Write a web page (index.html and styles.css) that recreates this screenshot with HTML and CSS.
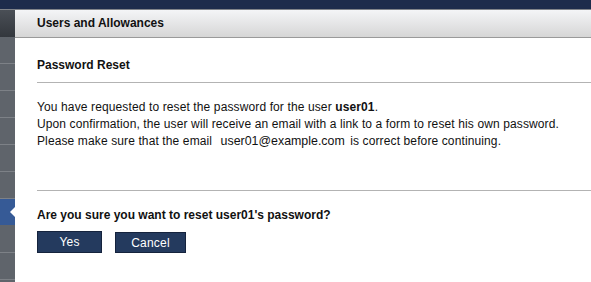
FILE: index.html
```html
<!DOCTYPE html>
<html>
<head>
<meta charset="utf-8">
<link rel="stylesheet" href="styles.css">
</head>
<body>
<div class="topbar"></div>
<div class="main">
  <nav class="sidebar">
    <div class="side-head"></div>
    <div class="side-item"></div>
    <div class="side-item"></div>
    <div class="side-item"></div>
    <div class="side-item"></div>
    <div class="side-item"></div>
    <div class="side-item"></div>
    <div class="side-item active"><span class="arrow"></span></div>
    <div class="side-item"></div>
    <div class="side-item"></div>
  </nav>
  <div class="content">
    <div class="header">Users and Allowances</div>
    <div class="body">
      <div class="section-title">Password Reset</div>
      <div class="message">
        <p>You have requested to reset the password for the user <b>user01</b>.</p>
        <p>Upon confirmation, the user will receive an email with a link to a form to reset his own password.</p>
        <p>Please make sure that the email <span class="email">user01@example.com</span> is correct before continuing.</p>
      </div>
      <div class="confirm">
        <div class="question">Are you sure you want to reset user01's password?</div>
        <div class="actions">
          <button class="btn btn-yes">Yes</button>
          <button class="btn btn-cancel">Cancel</button>
        </div>
      </div>
    </div>
  </div>
</div>
</body>
</html>
```
FILE: styles.css
```css
html, body {
  margin: 0;
  padding: 0;
  background: #ffffff;
}
body {
  font-family: "Liberation Sans", Arial, sans-serif;
  font-size: 12px;
  color: #111111;
  width: 591px;
  height: 282px;
  overflow: hidden;
}
.topbar {
  height: 9px;
  background: #1d2c4c;
  border-bottom: 1px solid #80848a;
}
.main {
  display: flex;
  height: 272px;
}
.sidebar {
  width: 15px;
  flex: none;
  background: #5f646b;
  display: flex;
  flex-direction: column;
}
.side-head {
  height: 27px;
  background: linear-gradient(#4a4f56, #33373d);
}
.side-item {
  height: 26px;
  border-bottom: 1px solid #7d8187;
  flex: none;
}
.side-item.active {
  background: #365a96;
  border-bottom-color: #5f646b;
  display: flex;
  align-items: center;
  justify-content: flex-end;
}
.arrow {
  width: 0;
  height: 0;
  border-top: 5px solid transparent;
  border-bottom: 5px solid transparent;
  border-right: 5px solid #ffffff;
}
.content {
  flex: 1;
  display: flex;
  flex-direction: column;
}
.header {
  height: 27px;
  line-height: 27px;
  padding-left: 22px;
  font-weight: bold;
  background: linear-gradient(#f4f5f7, #d6d6d6);
  border-bottom: 1px solid #9a9a9a;
}
.body {
  padding-left: 22px;
}
.section-title {
  font-weight: bold;
  line-height: 16px;
  padding: 19px 0 9px;
  border-bottom: 1px solid #b3b3b3;
}
.message {
  padding: 16px 0 40px;
  border-bottom: 1px solid #b3b3b3;
  letter-spacing: 0.12px;
}
.message p {
  margin: 0;
  line-height: 17px;
}
.email {
  font-size: 12.4px;
  margin: 0 2px 0 5px;
  letter-spacing: 0;
}
.question {
  font-weight: bold;
  line-height: 16px;
  margin-top: 16px;
}
.actions {
  display: flex;
  align-items: flex-end;
  gap: 13px;
  margin-top: 8px;
}
.btn {
  font-family: "Liberation Sans", Arial, sans-serif;
  font-size: 12px;
  letter-spacing: 0.2px;
  color: #ffffff;
  background: #243a5e;
  border: 1px solid #15233d;
  height: 22px;
  padding: 0;
  margin: 0;
}
.btn-yes {
  width: 65px;
}
.btn-cancel {
  width: 71px;
  height: 21px;
}
```
